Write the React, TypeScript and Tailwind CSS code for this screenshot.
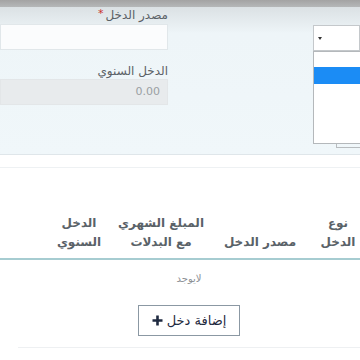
export default function App() {
  return (
    <div
      dir="rtl"
      className="relative h-[360px] w-[360px] overflow-hidden bg-white"
      style={{ fontFamily: '"DejaVu Sans", sans-serif' }}
    >
      {/* top bar */}
      <div className="h-[7px] bg-gradient-to-b from-[#a3a3a3] to-[#b5b7b8]" />

      {/* form panel */}
      <div className="h-[148px] border-b border-[#dfe6ea] bg-gradient-to-b from-[#dbe1e4] via-[#eef5f8] via-[18%] to-[#f0f7fa]">
        <div dir="ltr" className="flex justify-between">
          {/* fields */}
          <div dir="rtl" className="w-[168px]">
            <div className="flex h-[16px] items-center text-[12px] leading-[16px] text-[#5b6166]">
              <span>مصدر الدخل</span>
              <span className="mr-[2px] -mt-[3px] text-[11px] text-[#c9302c]">*</span>
            </div>
            <div className="mt-[1px] h-[26px] border border-[#e1e7ea] bg-[#fbfcfd]" />
            <div className="mt-[13px] h-[16px] text-[12px] leading-[16px] text-[#5b6166]">
              الدخل السنوي
            </div>
            <div className="flex h-[26px] items-center border border-[#e3e6e8] bg-[#e8ebed] pr-[7px] text-[11px] text-[#9a9fa3]">
              0.00
            </div>
          </div>

          {/* select with open list */}
          <div className="relative mt-[18px] w-[47px]">
            <div className="flex h-[26px] items-center border border-[#c4c8cb] bg-white pl-[4px]">
              <svg width="4" height="4" viewBox="0 0 4 4">
                <path d="M0 1 L4 1 L2 4 Z" fill="#333" />
              </svg>
            </div>
            <div className="absolute left-0 top-[26px] h-[93px] w-[60px] border border-[#b4b8bb] bg-white">
              <div className="mt-[15px] h-[17px] bg-[#1b8cf5]" />
            </div>
            <div className="absolute left-[23px] top-[119px] h-[4px] w-[40px] border-b border-l border-[#b8bcbf]" />
          </div>
        </div>
      </div>

      <div className="mt-[12px] border-t border-[#eef1f3]" />

      {/* table header */}
      <div className="mt-[46px] flex items-end whitespace-nowrap border-b-[2px] border-[#a6ccd1] pb-[6px] text-[12px] font-bold leading-[19px] text-[#5a6268]">
        <div className="w-[44px] text-center">
          نوع
          <br />
          الدخل
        </div>
        <div className="w-[112px] text-center">مصدر الدخل</div>
        <div className="w-[86px] text-center">
          المبلغ الشهري
          <br />
          مع البدلات
        </div>
        <div className="w-[78px] text-center">
          الدخل
          <br />
          السنوي
        </div>
      </div>

      {/* empty state + action */}
      <div className="pl-[18px] text-center">
        <div className="mt-[12px] text-[10px] leading-[14px] text-[#8c9094]">لايوجد</div>
        <div className="mt-[19px] flex justify-center">
          <button className="flex h-[31px] w-[102px] items-center justify-center gap-[4px] border border-[#8b98a3] bg-white text-[13px] text-[#1f2a40]">
            <span>إضافة دخل</span>
            <svg width="11" height="11" viewBox="0 0 11 11">
              <path d="M5.5 0.5 V10.5 M0.5 5.5 H10.5" stroke="#1f2a40" strokeWidth="2.6" />
            </svg>
          </button>
        </div>
        <div className="mt-[11px] border-t border-[#eef0f2]" />
      </div>
    </div>
  );
}
